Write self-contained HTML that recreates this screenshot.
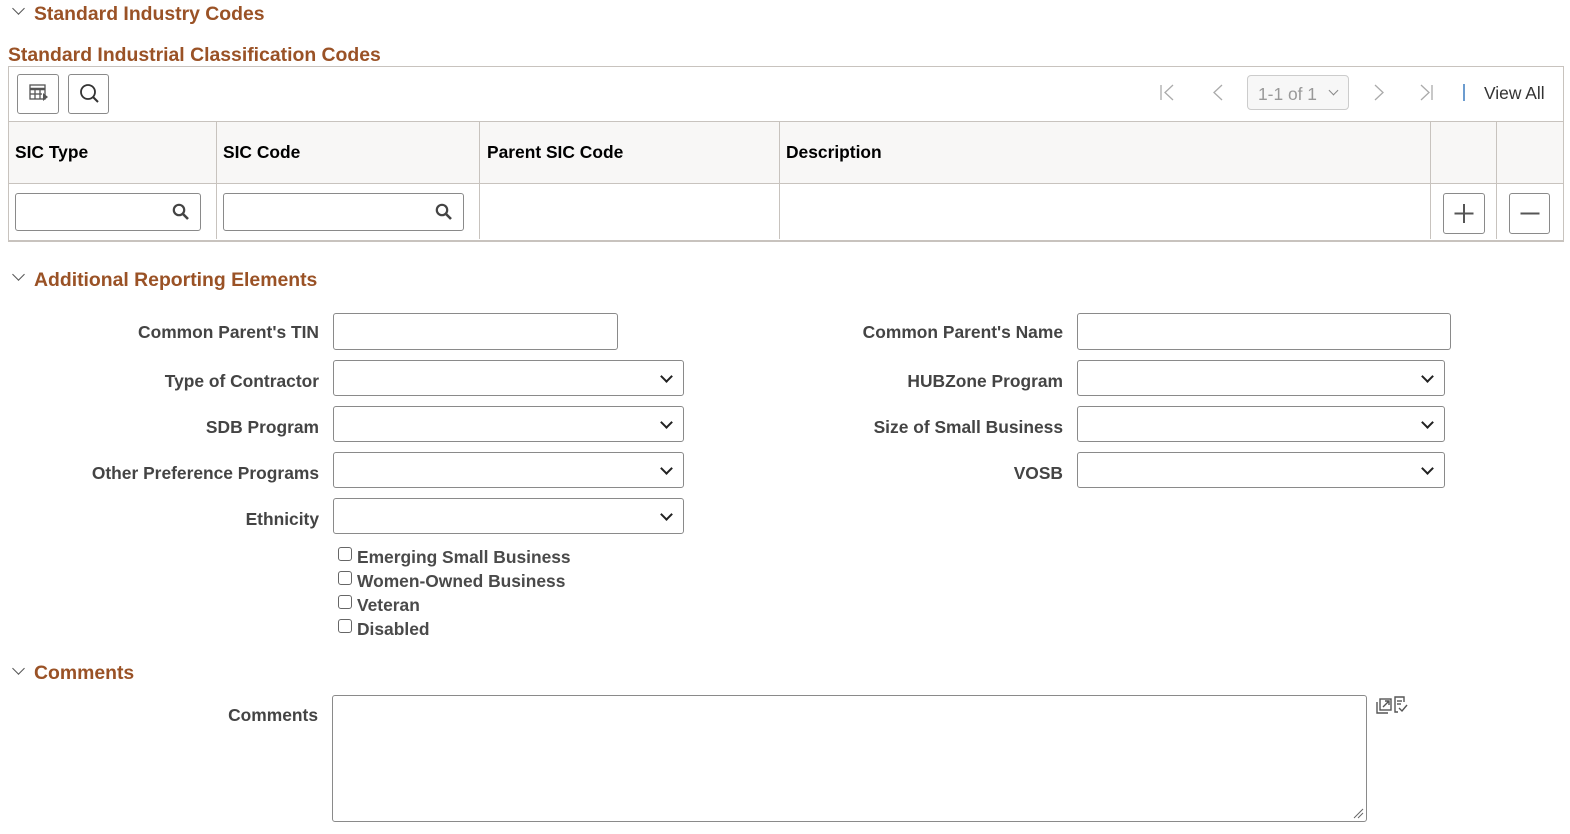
<!DOCTYPE html>
<html><head><meta charset="utf-8"><style>
*{box-sizing:border-box;margin:0;padding:0}
body{width:1570px;height:834px;background:#fff;font-family:"Liberation Sans",Arial,sans-serif;position:relative;overflow:hidden;color:#444}
.a{position:absolute}
.h{color:#9a5226;font-weight:bold;font-size:19.4px;white-space:nowrap}
.chev{position:absolute;width:9px;height:9px;border-right:1.6px solid #555;border-bottom:1.6px solid #555;transform:rotate(45deg)}
.lbl{position:absolute;font-weight:bold;font-size:17.4px;color:#444;text-align:right;white-space:nowrap}
.inp{position:absolute;border:1px solid #8a8a8a;border-radius:3px;background:#fff}
.sel::after{content:"";position:absolute;right:12px;top:11px;width:7px;height:7px;border-right:2px solid #222;border-bottom:2px solid #222;transform:rotate(45deg)}
.th{position:absolute;font-weight:bold;font-size:17.4px;color:#000;top:142px}
.vl{position:absolute;width:1px;background:#c8c3be}
.btn{position:absolute;border:1px solid #8a8a8a;border-radius:3px;background:#fff}
.cb{position:absolute;left:338px;width:14px;height:14px;border:1.3px solid #666;border-radius:3px}
.ct{position:absolute;left:357px;font-weight:bold;font-size:17.4px;color:#4a4a4a}
</style></head><body>
<div class="chev" style="left:14px;top:4px"></div>
<div class="a h" style="left:34px;top:3px">Standard Industry Codes</div>
<div class="a h" style="left:8px;top:44px">Standard Industrial Classification Codes</div>

<div class="a" style="left:8px;top:66px;width:1556px;height:176px;border:1px solid #c8c3be;border-bottom:2px solid #c8c3be"></div>
<div class="btn" style="left:17px;top:74px;width:42px;height:40px">
<svg width="40" height="38" viewBox="0 0 40 38"><g fill="none" stroke="#555" stroke-width="1.3"><rect x="12" y="10" width="15" height="14"/><line x1="12" y1="14" x2="27" y2="14" stroke-width="2.5"/><line x1="12" y1="19" x2="24" y2="19"/><line x1="17" y1="14" x2="17" y2="24"/><line x1="22" y1="14" x2="22" y2="24"/></g><path d="M25 18 L30 22 L25 26 Z" fill="#555"/></svg></div>
<div class="btn" style="left:68px;top:74px;width:41px;height:40px">
<svg width="40" height="38" viewBox="0 0 40 38"><circle cx="19" cy="17" r="7" fill="none" stroke="#333" stroke-width="1.8"/><line x1="24" y1="22" x2="29" y2="27" stroke="#333" stroke-width="2"/></svg></div>

<svg class="a" style="left:1155px;top:82px" width="400" height="22"><g fill="none" stroke="#aaa" stroke-width="1.3"><line x1="6" y1="3" x2="6" y2="18"/><path d="M18 3 L10 10.5 L18 18"/><path d="M67 3 L59 10.5 L67 18"/><path d="M220 3 L228 10.5 L220 18"/><path d="M266 3 L274 10.5 L266 18"/><line x1="277" y1="3" x2="277" y2="18"/></g><line x1="309" y1="2" x2="309" y2="19" stroke="#3a7bbf" stroke-width="1.5"/></svg>
<div class="a" style="left:1247px;top:75px;width:102px;height:35px;border:1px solid #ccc;border-radius:4px;background:#f7f7f7;color:#999;font-size:17.4px;padding:8px 0 0 10px">1-1 of 1</div>
<div class="a" style="left:1330px;top:87px;width:7px;height:7px;border-right:1.6px solid #888;border-bottom:1.6px solid #888;transform:rotate(45deg)"></div>
<div class="a" style="left:1484px;top:83px;font-size:17.4px;color:#333">View All</div>

<div class="a" style="left:9px;top:121px;width:1554px;height:63px;background:#f8f7f6;border-top:1px solid #c8c3be;border-bottom:1px solid #c8c3be"></div>
<div class="vl" style="left:216px;top:121px;height:118px"></div>
<div class="vl" style="left:479px;top:121px;height:118px"></div>
<div class="vl" style="left:779px;top:121px;height:118px"></div>
<div class="vl" style="left:1430px;top:121px;height:118px"></div>
<div class="vl" style="left:1496px;top:121px;height:118px"></div>
<div class="th" style="left:15px">SIC Type</div>
<div class="th" style="left:223px">SIC Code</div>
<div class="th" style="left:487px">Parent SIC Code</div>
<div class="th" style="left:786px">Description</div>
<div class="inp" style="left:15px;top:193px;width:186px;height:38px"><svg class="a" style="right:10px;top:9px" width="18" height="18"><circle cx="7" cy="7" r="5.2" fill="none" stroke="#444" stroke-width="2.2"/><line x1="11" y1="11" x2="16" y2="16" stroke="#444" stroke-width="2.6"/></svg></div>
<div class="inp" style="left:223px;top:193px;width:241px;height:38px"><svg class="a" style="right:10px;top:9px" width="18" height="18"><circle cx="7" cy="7" r="5.2" fill="none" stroke="#444" stroke-width="2.2"/><line x1="11" y1="11" x2="16" y2="16" stroke="#444" stroke-width="2.6"/></svg></div>
<div class="btn" style="left:1443px;top:193px;width:42px;height:41px"><svg width="40" height="39"><line x1="20" y1="10" x2="20" y2="29" stroke="#555" stroke-width="2"/><line x1="10.5" y1="19.5" x2="29.5" y2="19.5" stroke="#555" stroke-width="2"/></svg></div>
<div class="btn" style="left:1509px;top:193px;width:41px;height:41px"><svg width="40" height="39"><line x1="10.5" y1="19.5" x2="29.5" y2="19.5" stroke="#555" stroke-width="2"/></svg></div>

<div class="chev" style="left:14px;top:270px"></div>
<div class="a h" style="left:34px;top:269px">Additional Reporting Elements</div>

<div class="lbl" style="right:1251px;top:322px">Common Parent's TIN</div>
<div class="inp" style="left:333px;top:313px;width:285px;height:37px"></div>
<div class="lbl" style="right:1251px;top:371px">Type of Contractor</div>
<div class="inp sel" style="left:333px;top:360px;width:351px;height:36px"></div>
<div class="lbl" style="right:1251px;top:417px">SDB Program</div>
<div class="inp sel" style="left:333px;top:406px;width:351px;height:36px"></div>
<div class="lbl" style="right:1251px;top:463px">Other Preference Programs</div>
<div class="inp sel" style="left:333px;top:452px;width:351px;height:36px"></div>
<div class="lbl" style="right:1251px;top:509px">Ethnicity</div>
<div class="inp sel" style="left:333px;top:498px;width:351px;height:36px"></div>

<div class="lbl" style="right:507px;top:322px">Common Parent's Name</div>
<div class="inp" style="left:1077px;top:313px;width:374px;height:37px"></div>
<div class="lbl" style="right:507px;top:371px">HUBZone Program</div>
<div class="inp sel" style="left:1077px;top:360px;width:368px;height:36px"></div>
<div class="lbl" style="right:507px;top:417px">Size of Small Business</div>
<div class="inp sel" style="left:1077px;top:406px;width:368px;height:36px"></div>
<div class="lbl" style="right:507px;top:463px">VOSB</div>
<div class="inp sel" style="left:1077px;top:452px;width:368px;height:36px"></div>

<div class="cb" style="top:547px"></div><div class="ct" style="top:547px">Emerging Small Business</div>
<div class="cb" style="top:571px"></div><div class="ct" style="top:571px">Women-Owned Business</div>
<div class="cb" style="top:595px"></div><div class="ct" style="top:595px">Veteran</div>
<div class="cb" style="top:619px"></div><div class="ct" style="top:619px">Disabled</div>

<div class="chev" style="left:14px;top:664px"></div>
<div class="a h" style="left:34px;top:662px">Comments</div>
<div class="lbl" style="right:1252px;top:705px">Comments</div>
<div class="inp" style="left:332px;top:695px;width:1035px;height:127px"><svg class="a" style="right:2px;bottom:2px" width="12" height="12"><line x1="2" y1="11" x2="11" y2="2" stroke="#666"/><line x1="6" y1="11" x2="11" y2="6" stroke="#666"/></svg></div>
<svg class="a" style="left:1376px;top:695px" width="38" height="20"><g fill="none" stroke="#555" stroke-width="1.4"><rect x="4" y="4" width="11" height="11"/><path d="M1 7 V18 H12"/><path d="M7 12 L13 6 M9 6 H13 V10"/><path d="M19 13 V2 H28 V7"/><line x1="21" y1="6" x2="26" y2="6"/><line x1="21" y1="9" x2="25" y2="9"/><path d="M19 13 V17 H22"/><path d="M23 13 L26 16 L31 10"/></g></svg>
</body></html>
